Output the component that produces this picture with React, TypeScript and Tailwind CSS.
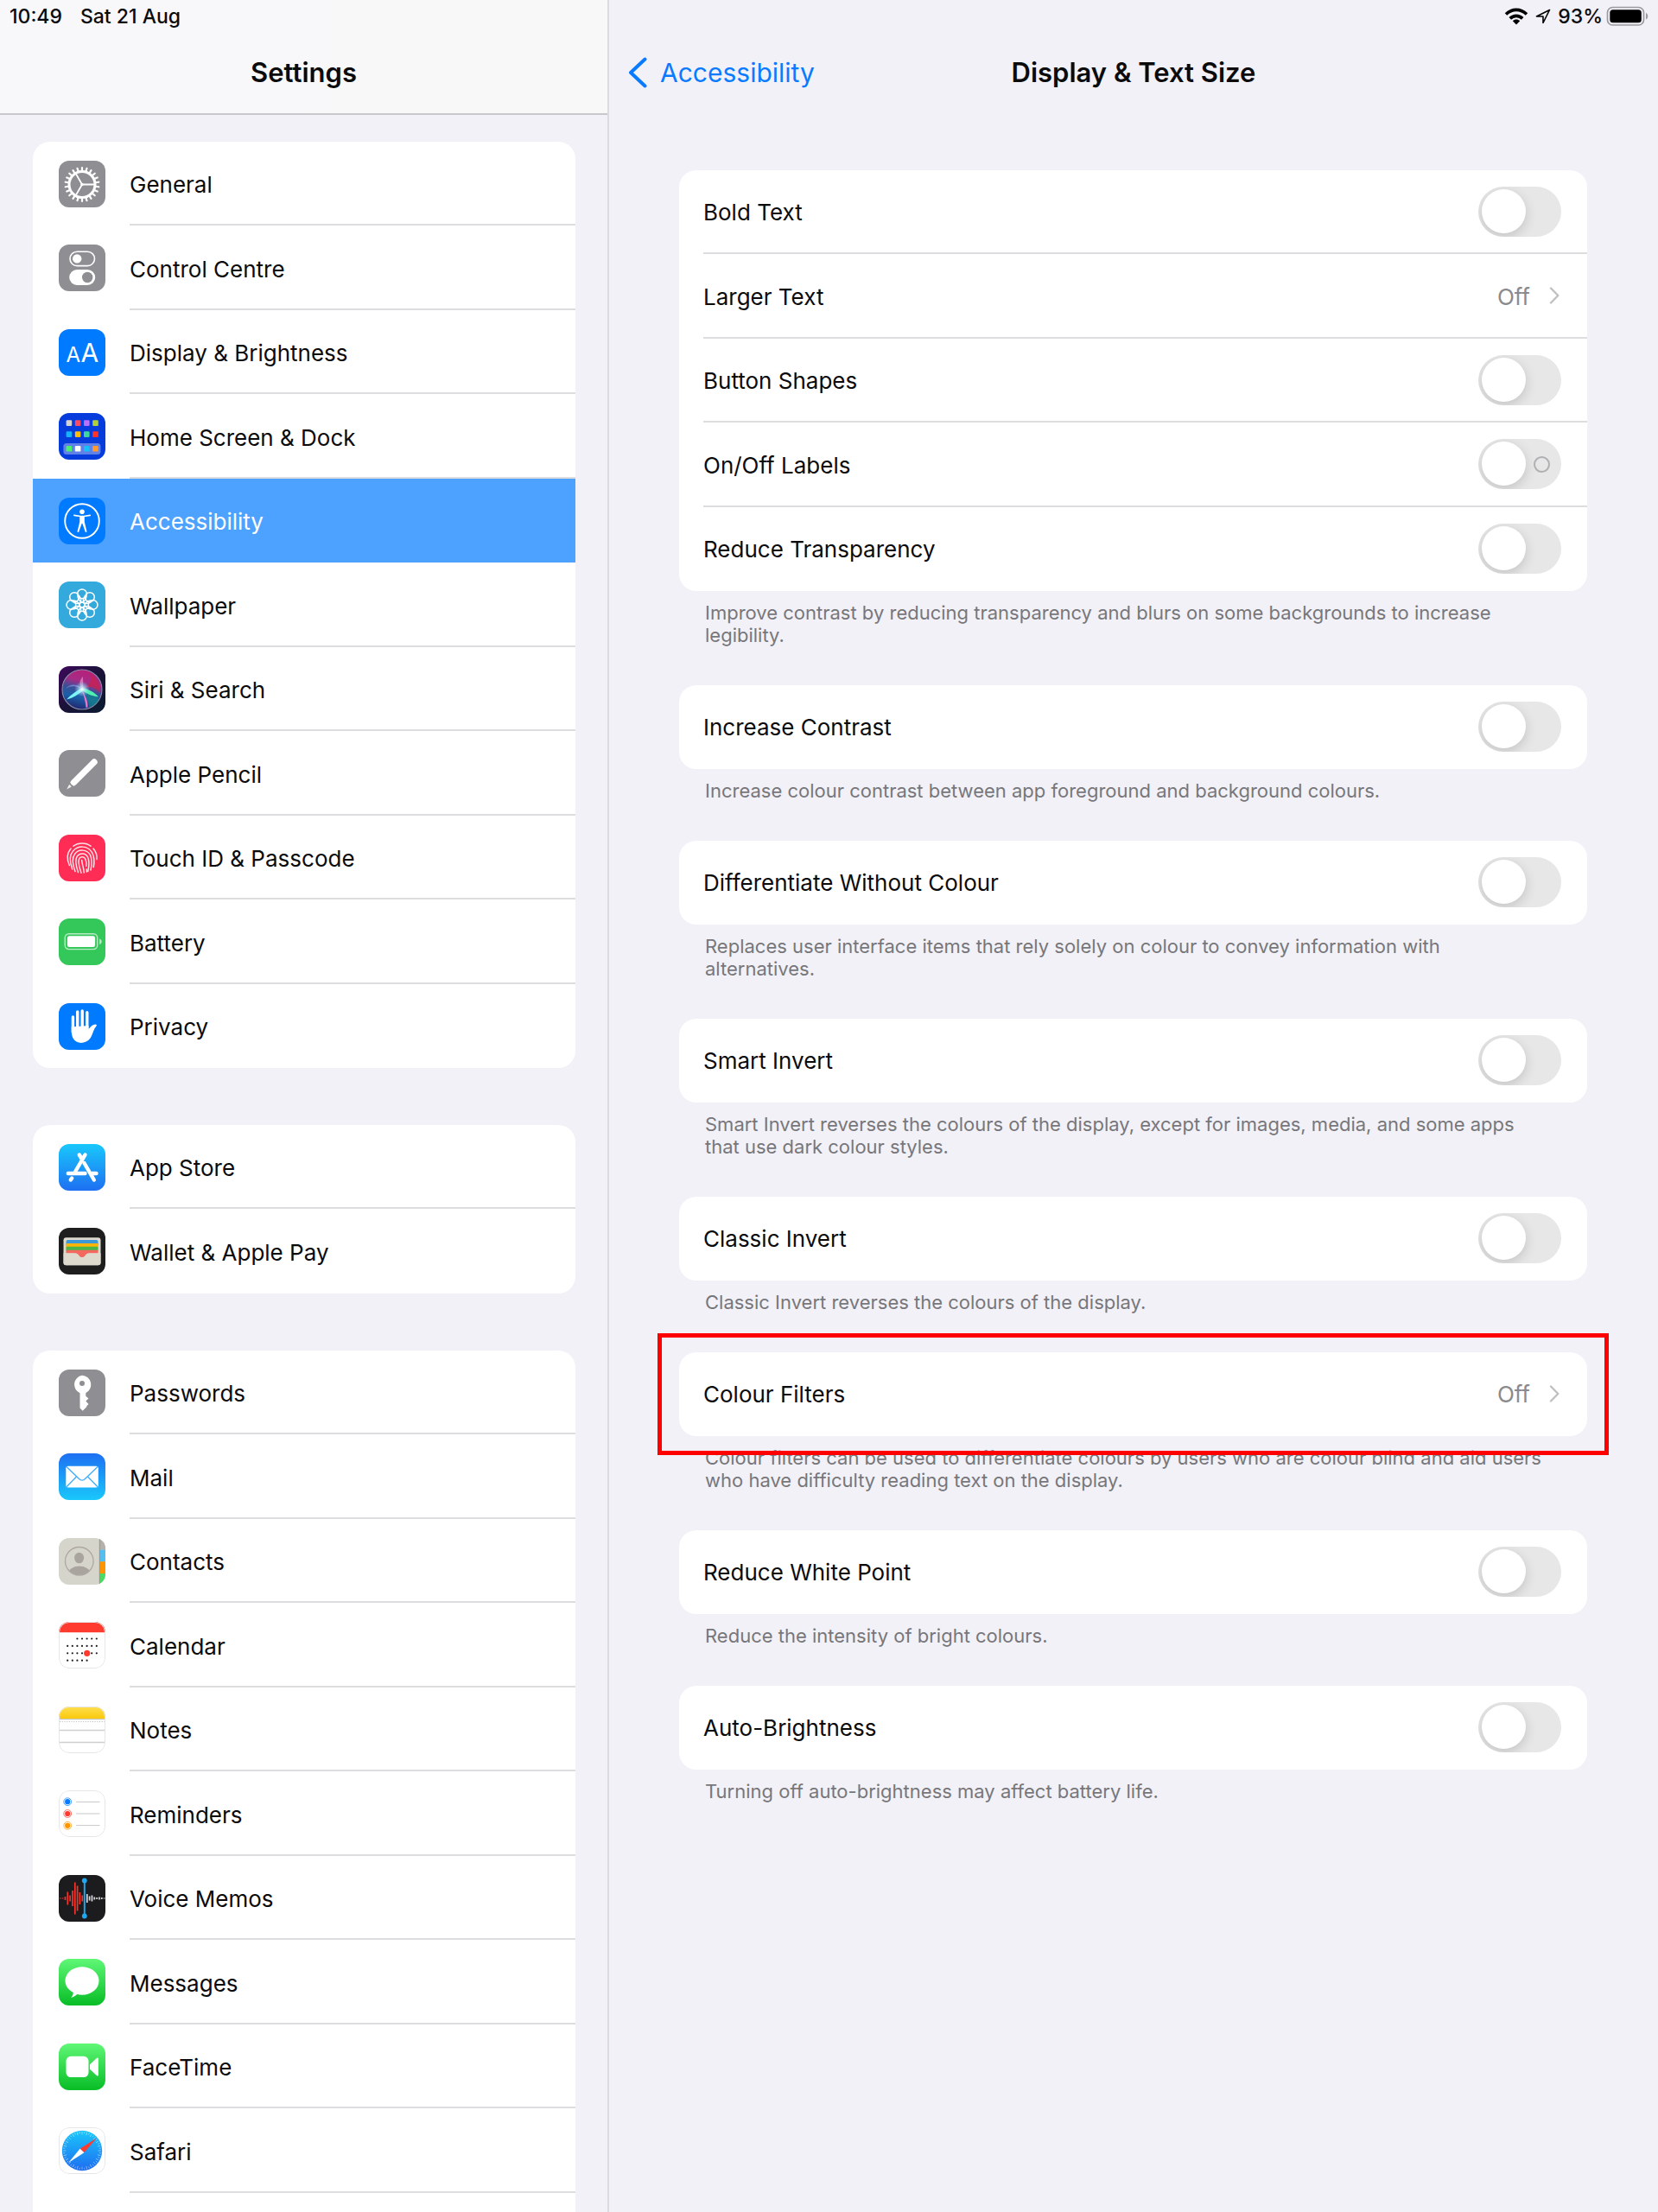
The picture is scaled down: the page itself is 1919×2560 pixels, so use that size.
import { ReactNode, useState } from "react";

interface SidebarItem {
  name: string,
  icon: ReactNode,
  iconOnly?: boolean
}

interface Setting {
  name: string,
  value?: string,
  labelled?: boolean
}

interface SettingGroup {
  settings: Setting[],
  note: string,
  highlighted?: boolean
}

const GRAY = "#8e8e93";
const BLUE = "#007aff";

function Tile({ fill, outlined, children }: { fill: string, outlined?: boolean, children?: ReactNode }) {
  return (
    <svg viewBox="0 0 54 54" className="size-[54px] shrink-0 rounded-xl" aria-hidden="true">
      <rect width="54" height="54" fill={fill} />
      {children}
      {outlined && <rect x="0.5" y="0.5" width="53" height="53" rx="11.5" fill="none" stroke="#e6e6e8" />}
    </svg>
  );
}

function Gradient({ id, from, to }: { id: string, from: string, to: string }) {
  return (
    <linearGradient id={id} x1="0" y1="0" x2="0" y2="1">
      <stop offset="0" stopColor={from} />
      <stop offset="1" stopColor={to} />
    </linearGradient>
  );
}

function GeneralIcon() {
  const teeth = Array.from({ length: 22 }, (_, i) => (i * 360) / 22);
  return (
    <Tile fill={GRAY}>
      <g stroke="#fff" fill="none" strokeLinecap="round">
        <circle cx="27" cy="27.5" r="15" strokeWidth="3" />
        {teeth.map(angle => (
          <path key={angle} d="M27 11.5V8" strokeWidth="2.2" transform={`rotate(${angle} 27 27.5)`} />
        ))}
        <path d="M27 27.5h15M27 27.5l-7.5 -13M27 27.5l-7.5 13" strokeWidth="1.8" />
      </g>
      <circle cx="27" cy="27.5" r="1.8" fill="#fff" />
    </Tile>
  );
}

function ControlCentreIcon() {
  return (
    <Tile fill={GRAY}>
      <rect x="13" y="8.2" width="28.5" height="16.4" rx="8.2" fill="none" stroke="#fff" strokeWidth="1.6" />
      <circle cx="21.2" cy="16.4" r="5.2" fill="#fff" />
      <rect x="12.2" y="29" width="30" height="18" rx="9" fill="#fff" />
      <circle cx="33.2" cy="38" r="6.2" fill={GRAY} />
    </Tile>
  );
}

function DisplayIcon() {
  return (
    <Tile fill={BLUE}>
      <text x="8.5" y="38" fill="#fff" fontSize="24" fontFamily="Inter">A</text>
      <text x="25.5" y="38" fill="#fff" fontSize="30" fontFamily="Inter">A</text>
    </Tile>
  );
}

function HomeScreenIcon() {
  const rows = [
    { y: 8.3, colors: ["#d8d3cf", "#ff4a63", "#b870ff", "#b0cf3a"] },
    { y: 21.3, colors: ["#13b5f7", "#ffbe0a", "#3fd69b", "#ff3328"] },
    { y: 38, colors: ["#4cee6b", "#ffffff", "#14c0fa", "#ff9a2e"] },
  ];
  return (
    <Tile fill="#063bdc">
      <rect x="5.4" y="35" width="43" height="13" rx="3.5" fill="#fff" opacity="0.36" />
      {rows.map(row => row.colors.map((color, i) => (
        <rect key={color} x={8.6 + i * 10.2} y={row.y} width="6.6" height="6.6" rx="1.2" fill={color} />
      )))}
    </Tile>
  );
}

function AccessibilityIcon() {
  return (
    <Tile fill={BLUE}>
      <circle cx="27" cy="27" r="19.8" fill="none" stroke="#fff" strokeWidth="1.9" />
      <circle cx="27" cy="16.2" r="2.8" fill="#fff" />
      <path d="M17.8 20.4l7 1.1h4.4l7 -1.1" fill="none" stroke="#fff" strokeWidth="1.7" strokeLinecap="round" />
      <path d="M24.2 21h5.6v7l2.8 11.4 -1.7 .5 -3.6 -10.2h-.6l-3.6 10.2 -1.7 -.5 2.8 -11.4z" fill="#fff" />
    </Tile>
  );
}

function WallpaperIcon() {
  const petals = [0, 45, 90, 135, 180, 225, 270, 315];
  return (
    <Tile fill="#34aadc">
      <g stroke="#fff" strokeWidth="1.5" fill="none">
        {petals.map(angle => (
          <g key={angle} transform={`rotate(${angle} 27 27)`}>
            <circle cx="27" cy="14.4" r="5.4" />
            <path d="M22 17C22.5 21 24.5 23 27 24.2C29.5 23 31.5 21 32 17" />
          </g>
        ))}
        <circle cx="27" cy="27" r="3" />
      </g>
    </Tile>
  );
}

function SiriIcon() {
  return (
    <Tile fill="url(#siriBack)">
      <defs>
        <linearGradient id="siriBack" x1="0" y1="0" x2="1" y2="1">
          <stop offset="0" stopColor="#40095c" />
          <stop offset="0.5" stopColor="#1a1238" />
          <stop offset="1" stopColor="#0a1c30" />
        </linearGradient>
        <linearGradient id="siriOrb" x1="0.6" y1="0" x2="0.35" y2="1">
          <stop offset="0" stopColor="#b81f78" />
          <stop offset="0.3" stopColor="#a52c86" />
          <stop offset="0.5" stopColor="#3a4f96" />
          <stop offset="0.7" stopColor="#1a5fa8" />
          <stop offset="1" stopColor="#22226a" />
        </linearGradient>
        <radialGradient id="siriGlow">
          <stop offset="0" stopColor="#fff" />
          <stop offset="0.35" stopColor="#c8f2ff" stopOpacity="0.7" />
          <stop offset="1" stopColor="#7fd8ff" stopOpacity="0" />
        </radialGradient>
      </defs>
      <circle cx="27" cy="27" r="23" fill="url(#siriOrb)" stroke="#8789a8" strokeWidth="1.1" />
      <path d="M27 26C36 22 43 24 48 32C49 24 45 14 36 9C40 16 37 21 27 26z" fill="#c8224e" opacity="0.75" />
      <path d="M27 26C38 27 46 34 46 40C43 45 38 47 35 47C35 40 31 32 27 26z" fill="#118a86" opacity="0.6" />
      <path d="M27 25.5C34 26 41 30 46 35.5C37 34.5 31 31 27 27.5z" fill="#4ff0b0" />
      <path d="M27 25.5C21 28 14 33 9 38.5C16 37 23 33 28 28z" fill="#7af6f8" />
      <path d="M26.500 27C30 33 34 39 33.500 47.500L31.500 48C31 41 29 34 26.500 27z" fill="#ee74c8" />
      <path d="M27 26C21 23 14 22 8 26C13 20 21 20 27 26z" fill="#7d9ce8" opacity="0.7" />
      <path d="M27 26C23 21 24 16 28 12C28 18 29 22 27 26z" fill="#f2a0d0" opacity="0.6" />
      <circle cx="27" cy="26.500" r="9" fill="url(#siriGlow)" />
    </Tile>
  );
}

function PencilIcon() {
  return (
    <Tile fill={GRAY}>
      <path d="M17.5 37.5L41 14" stroke="#fff" strokeWidth="7.4" strokeLinecap="round" />
      <path d="M13.2 37.2l4.6 4.6 2 -4.6 -2 -2z" fill="#fff" />
      <path d="M12.2 39.8l-3 5.6 5.7 -2.8z" fill="#fff" opacity="0.85" />
    </Tile>
  );
}

function TouchIdIcon() {
  return (
    <Tile fill="#ff2d55">
      <g stroke="#ffe1e6" strokeWidth="1.5" fill="none" strokeLinecap="round">
        <path d="M17 13.2C22.5 8.8 31.5 8.8 37 13.2" />
        <path d="M12.3 35.5C9.5 29 9 22 14 16" />
        <path d="M40 16C43.5 20 44.5 24 44 28.5" />
        <path d="M15.7 40C12 30 12 24 16.5 19C22.5 12 33.5 12.5 38.5 20.5C41 25 41.5 31 40.3 37.5" />
        <path d="M19 42.5C15.8 34 15 27 18.5 22.5C23 16 33 17 36.5 23.5C38.5 28 38.3 34.5 37 41" />
        <path d="M22.5 43.5C19.5 35 18.5 29 21.3 25C24 21 31 20.5 33.6 26C35.5 30 35 37 33.8 42.5" />
        <path d="M26 44.2C22.8 35 22 30.5 23.8 27.5C25.5 25 29.3 25 30.8 28C32.2 31 32.3 34 31.9 36.5" />
        <path d="M26.7 29.5C27 35 29 38 29.3 44" />
        <path d="M32.3 40v3" />
      </g>
    </Tile>
  );
}

function BatteryIcon() {
  return (
    <Tile fill="#34c759">
      <rect x="7.2" y="17.8" width="37.5" height="17.8" rx="4.5" fill="none" stroke="#fff" strokeOpacity="0.65" strokeWidth="1.4" />
      <rect x="9.9" y="20.3" width="32.2" height="12.8" rx="2.4" fill="#fff" />
      <path d="M47.2 23.5c3.2 .8 3.2 5.6 0 6.4z" fill="#fff" opacity="0.7" />
    </Tile>
  );
}

function PrivacyIcon() {
  return (
    <Tile fill={BLUE}>
      <g stroke="#fff" strokeWidth="3.4" strokeLinecap="round">
        <path d="M16.4 16v18M21.7 10v20M27.2 9v20M32.8 10.8v20" />
      </g>
      <path d="M14.7 27.5L34.5 26v4.3C36.5 27.5 39.5 24.5 42.5 24.5C44 24.7 44.3 25.8 43.3 26.8C40 30.5 39.7 36 36.5 40.5C31 48 20 47.5 16.5 40.5C15 37.5 14.7 34 14.7 27.5z" fill="#fff" />
    </Tile>
  );
}

function AppStoreIcon() {
  return (
    <Tile fill="url(#appStore)">
      <defs><Gradient id="appStore" from="#19c8fb" to="#1e6ff2" /></defs>
      <g stroke="#fff" strokeWidth="4.4" strokeLinecap="round">
        <path d="M30.5 12.5L18.5 33M23.8 12.5L26.5 17M15.2 39.5L13.8 41.5" />
        <path d="M10.8 34H30.5M38.5 34h5M29.5 22L40.8 41.5" />
      </g>
    </Tile>
  );
}

function WalletIcon() {
  return (
    <Tile fill="#1e1e1f">
      <rect x="5.5" y="11.3" width="43" height="32" rx="3" fill="#dedbce" />
      <rect x="8.5" y="14" width="37" height="8" rx="2" fill="#3b99d8" />
      <rect x="8.5" y="18" width="37" height="6" rx="1" fill="#ffb303" />
      <rect x="8.5" y="21.8" width="37" height="6" rx="1" fill="#4bb648" />
      <path d="M8.5 25.8h37v4H35.5c-3 0-4 1.5-5.2 3.3-1.5 2-5 2-6.5 0C22.5 31.3 21.5 29.8 18.5 29.8H8.500z" fill="#f4695f" />
      <path d="M5.5 29.3H18.5c3 0 4 1.500 5.200 3.300 1.500 2 5 2 6.500 0 1.300-1.800 2.300-3.300 5.300-3.300H48.500v11a3 3 0 0 1-3 3h-37a3 3 0 0 1-3-3z" fill="#dedbce" />
    </Tile>
  );
}

function PasswordsIcon() {
  return (
    <Tile fill={GRAY}>
      <path fillRule="evenodd" fill="#fff" d="M27 6.8a10.7 10.7 0 0 1 4.3 20.3v3.7l3.2 2.6-3.2 3.2 3.2 3.4-2.6 2.7.8 0-5 5-3.2-3.2V27.200A10.7 10.7 0 0 1 27 6.800zM27 12.900a3 3 0 1 0 0 6 3 3 0 0 0 0-6z" />
    </Tile>
  );
}

function MailIcon() {
  return (
    <Tile fill="url(#mail)">
      <defs><Gradient id="mail" from="#1e6ff2" to="#19c8fb" /></defs>
      <rect x="8.3" y="14.7" width="37.5" height="24.8" rx="2.5" fill="#fff" />
      <g stroke="#46aef8" strokeWidth="1.4" fill="none">
        <path d="M9 15.5L23.5 29.5c2 2 5 2 7 0L45 15.5" />
        <path d="M9 38.8l11.5-11.7M45 38.8L33.5 27.1" />
      </g>
    </Tile>
  );
}

function ContactsIcon() {
  return (
    <Tile fill="#d6d5cb">
      <clipPath id="face"><circle cx="23.8" cy="26.8" r="16" /></clipPath>
      <circle cx="23.8" cy="26.8" r="16.3" fill="none" stroke="#aca7a1" strokeWidth="1.3" />
      <ellipse cx="23.6" cy="23" rx="5.5" ry="6.3" fill="#aaa49f" />
      <ellipse cx="23.8" cy="41" rx="12.5" ry="8.5" fill="#aaa49f" clipPath="url(#face)" />
      <rect x="47.2" y="0" width="7" height="13.5" fill="#b4b1aa" />
      <rect x="47.2" y="13.5" width="7" height="14" fill="#55bdf0" />
      <rect x="47.2" y="27.3" width="7" height="14" fill="#ff9500" />
      <rect x="47.2" y="41" width="7" height="13" fill="#4cd964" />
      <path d="M47.3 0v54" stroke="#8d8a84" strokeWidth="0.8" />
    </Tile>
  );
}

function CalendarIcon() {
  // first and last column that hold a day, for each week
  const weeks = [[2, 6], [0, 6], [0, 6], [0, 4]];
  return (
    <Tile fill="#fff" outlined>
      <rect width="54" height="12.2" fill="#ff3b30" />
      {weeks.map(([first, last], week) => (
        Array.from({ length: last - first + 1 }, (_, i) => (
          <circle key={`${week}-${i}`} cx={10.2 + (first + i) * 5.6} cy={19.5 + week * 8.4} r="1.1" fill="#1c1c1e" />
        ))
      ))}
      <circle cx="32.7" cy="36.3" r="3.6" fill="#ff3b30" />
    </Tile>
  );
}

function NotesIcon() {
  return (
    <Tile fill="#fff" outlined>
      <defs><Gradient id="notes" from="#ffdf4f" to="#fbc90c" /></defs>
      <rect width="54" height="14" fill="url(#notes)" />
      <path d="M0 14.7h54" stroke="#c9c6bd" strokeWidth="1.3" />
      <path d="M1 17.5h54" stroke="#c4c4c6" strokeWidth="1.2" strokeDasharray="1.2 1.5" />
      <path d="M0 27.5h54M0 41.5h54" stroke="#cfcfd1" strokeWidth="1.3" />
    </Tile>
  );
}

function RemindersIcon() {
  return (
    <Tile fill="#fff" outlined>
      {["#0a7bff", "#ff3b30", "#ff9500"].map((color, i) => (
        <g key={color}>
          <circle cx="10.2" cy={13.2 + i * 13.8} r="4.4" fill="none" stroke={color} strokeWidth="0.9" strokeOpacity="0.8" />
          <circle cx="10.2" cy={13.2 + i * 13.8} r="3.1" fill={color} />
          <path d={`M20 ${13.4 + i * 13.6}h27.5`} stroke="#c8c8ca" />
        </g>
      ))}
    </Tile>
  );
}

function VoiceMemosIcon() {
  const red = [1, 1, 4, 15, 7, 18, 37, 29, 14, 7];
  const white = [10, 5, 7, 3, 2, 3, 2, 1];
  return (
    <Tile fill="#1c1c1e">
      <g strokeWidth="1.7">
        {red.map((height, i) => (
          <path key={i} d={`M${1.8 + i * 2.83} ${27 - height / 2}v${height}`} stroke="#f5342c" />
        ))}
        {white.map((height, i) => (
          <path key={i} d={`M${32.8 + i * 2.83} ${27 - height / 2}v${height}`} stroke="#d9d9db" />
        ))}
      </g>
      <path d="M29.8 6.5v41" stroke="#1ba8f5" strokeWidth="1.9" />
      <circle cx="29.8" cy="6.5" r="2.9" fill="#1ba8f5" />
      <circle cx="29.8" cy="47.5" r="2.9" fill="#1ba8f5" />
    </Tile>
  );
}

function MessagesIcon() {
  return (
    <Tile fill="url(#messages)">
      <defs><Gradient id="messages" from="#5ff777" to="#08bd26" /></defs>
      <path d="M27 9.2c10.8 0 19.5 7.2 19.5 16.3S37.8 41.8 27 41.8c-2 0-4-.2-5.8-.8-1.7 1.7-4 3.4-6.9 3.7 1.4-1.6 2.5-3.5 2.5-5.8C11 36 7.5 31 7.5 25.5 7.5 16.4 16.2 9.200 27 9.200z" fill="#fff" />
    </Tile>
  );
}

function FaceTimeIcon() {
  return (
    <Tile fill="url(#facetime)">
      <defs><Gradient id="facetime" from="#5ff777" to="#08bd26" /></defs>
      <rect x="8.5" y="14.8" width="26" height="24.2" rx="5.5" fill="#fff" />
      <path d="M36 24.3l7.8-7.3c1-.9 2-.6 2 .8v18.4c0 1.4-1 1.7-2 .8L36 29.800z" fill="#fff" />
    </Tile>
  );
}

function SafariIcon() {
  const ticks = Array.from({ length: 48 }, (_, i) => i * 7.5);
  return (
    <Tile fill="#fff" outlined>
      <defs><Gradient id="safari" from="#1ac6fb" to="#1e6df0" /></defs>
      <circle cx="27" cy="27" r="23.2" fill="url(#safari)" />
      {ticks.map((angle, i) => (
        <path key={angle} d={i % 2 ? "M27 5v2" : "M27 5v3.5"} stroke="#fff" strokeOpacity="0.7" strokeWidth="0.6" transform={`rotate(${angle} 27 27)`} />
      ))}
      <path d="M43.8 12.5L24.6 24.8l4.8 4.4z" fill="#ff3b30" />
      <path d="M11.2 41L24.6 24.8l4.8 4.4z" fill="#fff" />
    </Tile>
  );
}

function StocksIcon() {
  return (
    <Tile fill="#1c1c1e">
      <path d="M4 36l8-8 6 5 8-13 6 7 6-10 12 8" stroke="#fff" strokeWidth="2" fill="none" />
      <path d="M37 0v54" stroke="#1ba8f5" strokeWidth="1.6" />
    </Tile>
  );
}

const sidebarGroups: SidebarItem[][] = [
  [
    { name: "General", icon: <GeneralIcon /> },
    { name: "Control Centre", icon: <ControlCentreIcon /> },
    { name: "Display & Brightness", icon: <DisplayIcon /> },
    { name: "Home Screen & Dock", icon: <HomeScreenIcon /> },
    { name: "Accessibility", icon: <AccessibilityIcon /> },
    { name: "Wallpaper", icon: <WallpaperIcon /> },
    { name: "Siri & Search", icon: <SiriIcon /> },
    { name: "Apple Pencil", icon: <PencilIcon /> },
    { name: "Touch ID & Passcode", icon: <TouchIdIcon /> },
    { name: "Battery", icon: <BatteryIcon /> },
    { name: "Privacy", icon: <PrivacyIcon /> },
  ],
  [
    { name: "App Store", icon: <AppStoreIcon /> },
    { name: "Wallet & Apple Pay", icon: <WalletIcon /> },
  ],
  [
    { name: "Passwords", icon: <PasswordsIcon /> },
    { name: "Mail", icon: <MailIcon /> },
    { name: "Contacts", icon: <ContactsIcon /> },
    { name: "Calendar", icon: <CalendarIcon /> },
    { name: "Notes", icon: <NotesIcon /> },
    { name: "Reminders", icon: <RemindersIcon /> },
    { name: "Voice Memos", icon: <VoiceMemosIcon /> },
    { name: "Messages", icon: <MessagesIcon /> },
    { name: "FaceTime", icon: <FaceTimeIcon /> },
    { name: "Safari", icon: <SafariIcon /> },
    { name: "Stocks", icon: <StocksIcon />, iconOnly: true },
  ],
];

const settingGroups: SettingGroup[] = [
  {
    settings: [
      { name: "Bold Text" },
      { name: "Larger Text", value: "Off" },
      { name: "Button Shapes" },
      { name: "On/Off Labels", labelled: true },
      { name: "Reduce Transparency" },
    ],
    note: "Improve contrast by reducing transparency and blurs on some backgrounds to increase legibility.",
  },
  { settings: [{ name: "Increase Contrast" }], note: "Increase colour contrast between app foreground and background colours." },
  { settings: [{ name: "Differentiate Without Colour" }], note: "Replaces user interface items that rely solely on colour to convey information with alternatives." },
  { settings: [{ name: "Smart Invert" }], note: "Smart Invert reverses the colours of the display, except for images, media, and some apps that use dark colour styles." },
  { settings: [{ name: "Classic Invert" }], note: "Classic Invert reverses the colours of the display." },
  {
    settings: [{ name: "Colour Filters", value: "Off" }],
    note: "Colour filters can be used to differentiate colours by users who are colour blind and aid users who have difficulty reading text on the display.",
    highlighted: true,
  },
  { settings: [{ name: "Reduce White Point" }], note: "Reduce the intensity of bright colours." },
  { settings: [{ name: "Auto-Brightness" }], note: "Turning off auto-brightness may affect battery life." },
];

function Sidebar() {
  const [selected, setSelected] = useState("Accessibility");

  return (
    <aside className="flex w-[705px] shrink-0 flex-col border-r-2 border-[#dcdce0]">
      <header className="border-b-2 border-[#c9c9cd] bg-linear-to-r from-[#f8f8fb] to-[#f8f8f8]">
        <div className="flex h-[38px] items-center gap-[21px] pl-[11px] text-[23px] font-medium">
          <span>10:49</span>
          <span>Sat 21 Aug</span>
        </div>
        <h1 className="h-[93px] pt-[26px] text-center text-[31px] leading-10 font-semibold">Settings</h1>
      </header>
      <nav className="flex min-h-0 flex-1 flex-col gap-[66px] overflow-hidden pt-[31px] pr-[37px] pl-[38px]">
        {sidebarGroups.map(group => (
          <ul key={group[0].name} className="shrink-0 overflow-hidden rounded-[20px] bg-white">
            {group.map(item => (
              <li key={item.name} className="group h-[97px] even:h-[98px]">
                <a
                  href="#"
                  aria-label={item.name}
                  onClick={() => setSelected(item.name)}
                  className={[
                    "flex h-full items-center gap-7 pl-[30px]",
                    (selected === item.name ? "bg-[#4da1ff] text-white" : "")
                  ].join(" ")}
                >
                  {item.icon}
                  <span className={[
                    "flex h-full flex-1 items-center border-b-2 pt-1 text-[26px] group-last:border-transparent",
                    (selected === item.name ? "border-transparent" : "border-[#dddddf]")
                  ].join(" ")}>
                    {!item.iconOnly && item.name}
                  </span>
                </a>
              </li>
            ))}
          </ul>
        ))}
      </nav>
    </aside>
  );
}

function Toggle({ id, labelled }: { id: string, labelled?: boolean }) {
  return (
    <input
      id={id}
      type="checkbox"
      role="switch"
      className={[
        "relative h-[58px] w-24 appearance-none overflow-hidden rounded-full bg-[#e7e7e8] checked:bg-[#34c759]",
        "before:absolute before:top-[3px] before:left-1 before:size-[51px] before:rounded-full before:bg-white before:shadow-[0_4px_14px_rgba(0,0,0,0.16)] checked:before:left-[41px]",
        (labelled ? "after:absolute after:top-5 after:right-[13px] after:size-[19px] after:rounded-full after:border-2 after:border-[#b0b0b2]" : "")
      ].join(" ")}
    />
  );
}

function SettingRow({ setting }: { setting: Setting }) {
  const id = setting.name.toLowerCase().replace(/[^a-z]+/g, "-");
  const rowStyle = "flex h-full items-center justify-between border-b-2 border-[#dddddf] text-[26px] group-last:border-transparent";

  return (
    <li className="group h-[97px] pl-7 even:h-[98px]">
      {setting.value ? (
        <a href="#" className={`${rowStyle} pr-8`}>
          <span className="pt-0.5">{setting.name}</span>
          <span className="flex items-center gap-[22px] text-[#8a8a8e]">
            <span className="pt-0.5">{setting.value}</span>
            <svg viewBox="0 0 12 20" className="h-5 w-3" fill="none" stroke="#c0c0c3" strokeWidth="2.4" strokeLinecap="round" strokeLinejoin="round" aria-hidden="true">
              <path d="M2 1.5L10.3 10L2 18.5" />
            </svg>
          </span>
        </a>
      ) : (
        <div className={`${rowStyle} pr-[30px]`}>
          <label htmlFor={id} className="pt-0.5">{setting.name}</label>
          <Toggle id={id} labelled={setting.labelled} />
        </div>
      )}
    </li>
  );
}

function StatusIcons() {
  return (
    <div className="flex h-[38px] items-center justify-end pr-2.5 text-[23px] font-medium">
      <svg viewBox="0 0 28 20" className="mr-2 h-5 w-7" aria-hidden="true">
        <g fill="none" stroke="#000" strokeWidth="3.6">
          <path d="M2 7.5C9 .7 19 .7 26 7.5" />
          <path d="M6.8 12.4C11 8.3 17 8.3 21.2 12.4" />
        </g>
        <path d="M14 19.5l-4.2-4.3c2.4-2.3 6-2.3 8.4 0z" />
      </svg>
      <svg viewBox="0 0 18 18" className="mr-2 size-[18px]" fill="none" stroke="#000" strokeWidth="1.6" strokeLinejoin="round" aria-hidden="true">
        <path d="M16.5 1.5L1.5 9H9v7.5z" />
      </svg>
      <span className="mr-1">93%</span>
      <svg viewBox="0 0 50 24" className="h-6 w-[50px]" aria-hidden="true">
        <rect x="1.5" y="1.5" width="42" height="20.5" rx="6" fill="none" stroke="#9b9b9f" strokeWidth="1.7" />
        <rect x="4.3" y="4.3" width="36.5" height="15" rx="3.5" />
        <path d="M46 8c3 1 3 6.5 0 7.5z" fill="#9b9b9f" />
      </svg>
    </div>
  );
}

export default function App() {
  return (
    <div className="flex h-screen overflow-hidden bg-[#f2f1f7] font-[Inter,'Liberation_Sans',sans-serif] text-[#0b0b0c]">
      <Sidebar />
      <main className="min-w-0 flex-1 overflow-hidden">
        <StatusIcons />
        <header className="grid h-[159px] grid-cols-[1fr_auto_1fr] items-start pt-[26px] pl-[22px] text-[30px] leading-10">
          <a href="#" className="flex items-center gap-[15px] text-[#0a7bff]">
            <svg viewBox="0 0 22 36" className="h-9 w-[22px]" fill="none" stroke="currentColor" strokeWidth="4" strokeLinecap="round" strokeLinejoin="round" aria-hidden="true">
              <path d="M19.5 2.5L3 18L19.5 33.5" />
            </svg>
            Accessibility
          </a>
          <h2 className="pr-[22px] text-[31px] leading-10 font-semibold">Display &amp; Text Size</h2>
        </header>
        <div className="pr-[82px] pl-[81px]">
          {settingGroups.map(group => (
            <section key={group.settings[0].name}>
              <div className="relative">
                <ul className="rounded-[20px] bg-white">
                  {group.settings.map(setting => <SettingRow key={setting.name} setting={setting} />)}
                </ul>
                {group.highlighted && (
                  <div className="pointer-events-none absolute -inset-x-[25px] -inset-y-[22px] border-[5px] border-[#ff0000]" />
                )}
              </div>
              <p className="pt-3 pr-[46px] pb-[45px] pl-[30px] text-[22px] leading-[26px] text-[#77777b]">{group.note}</p>
            </section>
          ))}
        </div>
      </main>
    </div>
  );
}
